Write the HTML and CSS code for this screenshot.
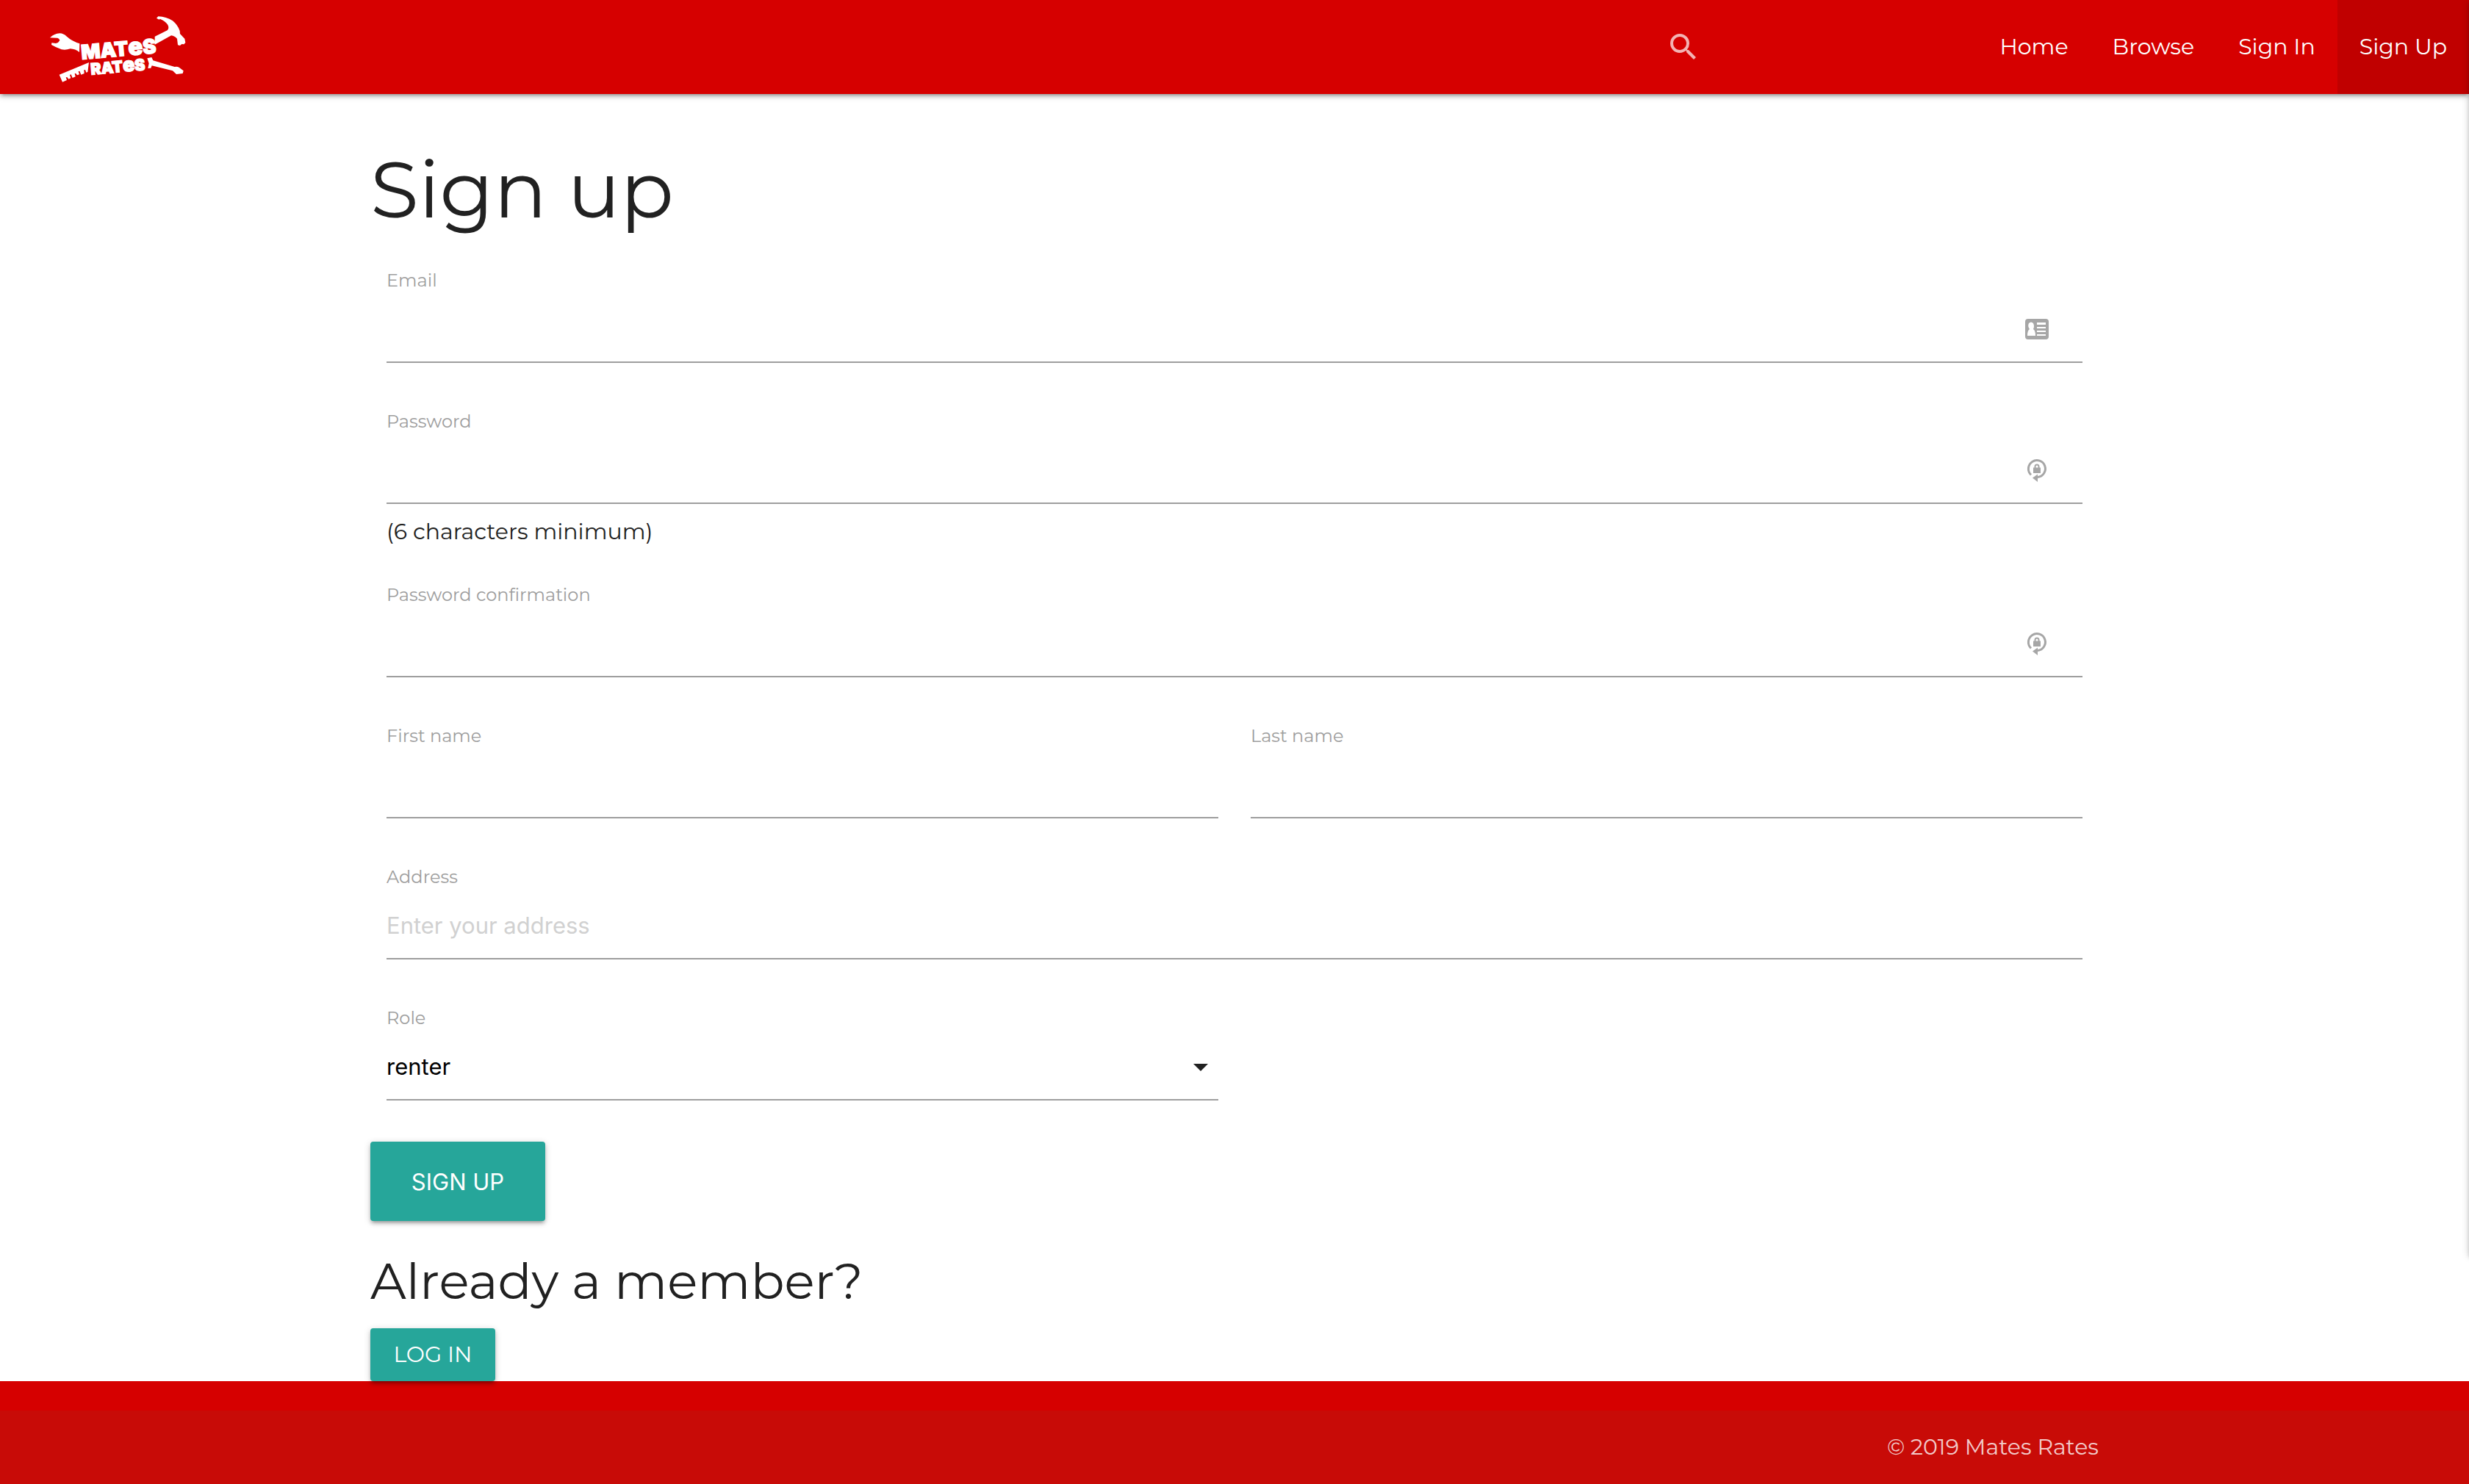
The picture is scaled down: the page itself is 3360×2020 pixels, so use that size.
FILE: index.html
```html
<!DOCTYPE html>
<html lang="en">
<head>
<meta charset="utf-8">
<meta name="viewport" content="width=device-width, initial-scale=1">
<title>Mates Rates</title>
<link rel="stylesheet" href="styles.css">
</head>
<body>
<header class="navbar">
  <a class="brand" href="#" aria-label="Mates Rates">
    <svg class="brand-logo" viewBox="0 0 720 384" fill="#fff">
      <!-- wrench -->
      <path d="M84 154 Q101 137 124 136 Q140 137 151 148 Q174 169 205 178 L204 213 Q188 200 167 199 Q148 206 131 202 Q109 194 90 183 L91 175 L108 177 Q120 174 124 165 Q123 158 115 155 Q99 155 84 154Z"/>
      <!-- hammer -->
      <path d="M519 74 L526 67 Q559 68 585 85 Q605 101 614 126 L615 138 L634 158 L637 174 L631 181 L622 180 L615 186 L606 184 L603 158 Q594 147 579 145 L512 182 L512 149 L563 124 Q572 115 565 101 Q553 84 533 77 L530 80 Z"/>
      <!-- ruler -->
      <path d="M122 305 L243 255 L238 294 L232 296 L228 285 L223 286 L224 300 L211 305 L205 290 L200 292 L204 304 L195 307 L189 299 L185 301 L188 313 L176 318 L170 304 L165 306 L169 319 L160 323 L154 315 L149 316 L153 327 L135 335 Z"/>
      <!-- screwdriver -->
      <path d="M481 238 L499 234 L505 247 L593 273 Q602 270 611 275 L629 289 L626 300 L600 303 L585 289 L500 268 L496 278 L484 279 L488 259 Z"/>
      <text class="logo-text" x="214" y="243" font-size="82" transform="rotate(-5 214 243)">MAT<tspan font-size="98">e</tspan>S</text>
      <text class="logo-text" x="252" y="305" font-size="64" transform="rotate(-5 252 305)">RAT<tspan font-size="80">e</tspan>S</text>
    </svg>
  </a>
  <form class="search">
    <label for="search">
      <svg class="search-icon" viewBox="0 0 24 24" fill="currentColor"><path d="M15.5 14h-.79l-.28-.27A6.47 6.47 0 0 0 16 9.5 6.5 6.5 0 1 0 9.5 16c1.61 0 3.09-.59 4.23-1.57l.27.28v.79l5 4.99L20.49 19l-4.99-5zm-6 0C7.01 14 5 11.99 5 9.5S7.01 5 9.5 5 14 7.01 14 9.5 11.99 14 9.5 14z"/></svg>
    </label>
    <input id="search" type="search" aria-label="Search">
  </form>
  <nav class="links">
    <a href="#">Home</a>
    <a href="#">Browse</a>
    <a href="#">Sign In</a>
    <a class="active" href="#">Sign Up</a>
  </nav>
</header>
<aside class="drawer" aria-hidden="true"></aside>

<main class="container">
  <h1>Sign up</h1>
  <form>
    <div class="fields">
      <div class="field wide">
        <label for="email">Email</label>
        <div class="control">
          <input id="email" type="email">
          <svg class="badge" viewBox="0 0 32 32" fill="#a6a6a6">
            <path fill-rule="evenodd" d="M4 2H28Q32 2 32 6V26Q32 30 28 30H4Q0 30 0 26V6Q0 2 4 2ZM16 7V10H28V7ZM16 13V15H28V13ZM16 18V20H28V18ZM16 23V25H28V23ZM3 25H14Q14 18 11 16Q13 12 11 8Q8 5 5 8Q3 12 6 16Q3 18 3 25Z"/>
          </svg>
        </div>
      </div>
      <div class="field wide">
        <label for="password">Password</label>
        <div class="control">
          <input id="password" type="password">
          <svg class="badge" viewBox="0 0 32 32">
            <path d="M8 22.400A11.500 11.500 0 1 1 17 25.500" fill="none" stroke="#a6a6a6" stroke-width="3"/>
            <path d="M10 26.500L17 21.500V32Z" fill="#a6a6a6"/>
            <path d="M13.500 13V11A2.500 2.500 0 0 1 18.500 11V13" fill="none" stroke="#a6a6a6" stroke-width="2"/>
            <path d="M11 12.500H21V20H11Z" fill="#a6a6a6"/>
          </svg>
        </div>
        <p class="hint">(6 characters minimum)</p>
      </div>
      <div class="field wide">
        <label for="confirm">Password confirmation</label>
        <div class="control">
          <input id="confirm" type="password">
          <svg class="badge" viewBox="0 0 32 32">
            <path d="M8 22.400A11.500 11.500 0 1 1 17 25.500" fill="none" stroke="#a6a6a6" stroke-width="3"/>
            <path d="M10 26.500L17 21.500V32Z" fill="#a6a6a6"/>
            <path d="M13.500 13V11A2.500 2.500 0 0 1 18.500 11V13" fill="none" stroke="#a6a6a6" stroke-width="2"/>
            <path d="M11 12.500H21V20H11Z" fill="#a6a6a6"/>
          </svg>
        </div>
      </div>
      <div class="field">
        <label for="first">First name</label>
        <div class="control"><input id="first" type="text"></div>
      </div>
      <div class="field">
        <label for="last">Last name</label>
        <div class="control"><input id="last" type="text"></div>
      </div>
      <div class="field wide">
        <label for="address">Address</label>
        <div class="control"><input id="address" type="text" placeholder="Enter your address"></div>
      </div>
      <div class="field">
        <label for="role">Role</label>
        <div class="control">
          <select id="role"><option>renter</option><option>owner</option></select>
          <svg class="caret" viewBox="0 0 20 10" fill="#212121"><path d="M0 0H20L10 10Z"/></svg>
        </div>
      </div>
    </div>
    <button class="btn btn-large" type="submit">SIGN UP</button>
  </form>
  <h2>Already a member?</h2>
  <a class="btn" href="#">LOG IN</a>
</main>

<footer class="footer">
  <div class="copyright"><p>© 2019 Mates Rates</p></div>
</footer>
</body>
</html>
```
FILE: styles.css
```css
* { box-sizing: border-box; }

body {
  margin: 0;
  min-height: 100vh;
  display: flex;
  flex-direction: column;
  position: relative;
  overflow-x: hidden;
  background: #fff;
  color: #212121;
  font-family: Montserrat, Inter, "Liberation Sans", sans-serif;
  font-size: 30px;
}

h1, h2, p { margin: 0; font-weight: 400; }
a { color: inherit; text-decoration: none; }
svg { display: block; }

.navbar {
  display: flex;
  height: 128px;
  background: #d60000;
  color: #fff;
  box-shadow: 0 4px 4px rgba(0, 0, 0, .14), 0 6px 2px -4px rgba(0, 0, 0, .12), 0 2px 10px rgba(0, 0, 0, .2);
}
.brand { margin-left: 40px; margin-right: auto; }
.brand-logo { width: 240px; height: 128px; }
.logo-text { font-family: Inter, sans-serif; font-weight: 900; stroke: #fff; stroke-width: 4; }

.search { display: flex; align-items: center; width: 424px; }
.search-icon { width: 48px; height: 48px; color: rgba(255, 255, 255, .7); }
.search input {
  flex: 1;
  min-width: 0;
  height: 90px;
  border: 0;
  outline: 0;
  background: transparent;
  color: #fff;
  font: inherit;
}
.links { display: flex; line-height: 128px; }
.links a { padding: 0 30px; }
.links .active { background: rgba(0, 0, 0, .1); }

/* closed side drawer, parked past the right edge */
.drawer {
  position: absolute;
  top: 0;
  left: 100%;
  width: 40px;
  height: 1708px;
  box-shadow: 0 4px 4px rgba(0, 0, 0, .14), 0 6px 2px -4px rgba(0, 0, 0, .12), 0 2px 10px rgba(0, 0, 0, .2);
}

.container { flex: 1 0 auto; width: 70%; margin: 0 auto; padding-top: 72px; }
h1 { margin-bottom: 2px; font-size: 107px; line-height: 116px; }
h2 { margin: 42px 0 24px; font-size: 68px; line-height: 80px; }

.fields { display: grid; grid-template-columns: 1fr 1fr; column-gap: 44px; padding: 0 22px; }
.field { padding: 48px 0 16px; }
.wide { grid-column: 1 / -1; }
.field:has(.hint) { padding-bottom: 0; }
.field label {
  display: block;
  margin-bottom: 4px;
  color: #9e9e9e;
  font-size: 24px;
  line-height: 32px;
}
.control { position: relative; }
.control input, .control select {
  display: block;
  width: 100%;
  height: 92px;
  padding: 0;
  border: 0;
  border-bottom: 2px solid #9e9e9e;
  border-radius: 0;
  outline: 0;
  appearance: none;
  background: transparent;
  color: #000;
  font: 31px Inter, sans-serif;
}
.control input::placeholder { color: #d1d1d1; opacity: 1; }
.badge { position: absolute; top: 30px; right: 46px; width: 32px; height: 32px; overflow: visible; }
.caret { position: absolute; top: 42px; right: 14px; width: 20px; height: 10px; pointer-events: none; }
.hint { margin-top: 16px; line-height: 44px; }

.btn {
  display: block;
  width: fit-content;
  min-width: 170px;
  height: 72px;
  border: 0;
  border-radius: 4px;
  background: #26a69a;
  color: #fff;
  font-family: inherit;
  font-size: 30px;
  line-height: 72px;
  text-align: center;
  box-shadow: 0 4px 4px rgba(0, 0, 0, .14), 0 6px 2px -4px rgba(0, 0, 0, .12), 0 2px 10px rgba(0, 0, 0, .2);
  position: relative;
  z-index: 1;
}
.btn-large { min-width: 238px; height: 108px; margin-top: 40px; font-family: Inter, sans-serif; font-size: 31px; line-height: 108px; }

.footer { padding-top: 40px; background: #d60000; }
.copyright { background: #c80b07; color: rgba(255, 255, 255, .8); line-height: 100px; text-align: right; }
.copyright p { width: 70%; margin: 0 auto; }
```
